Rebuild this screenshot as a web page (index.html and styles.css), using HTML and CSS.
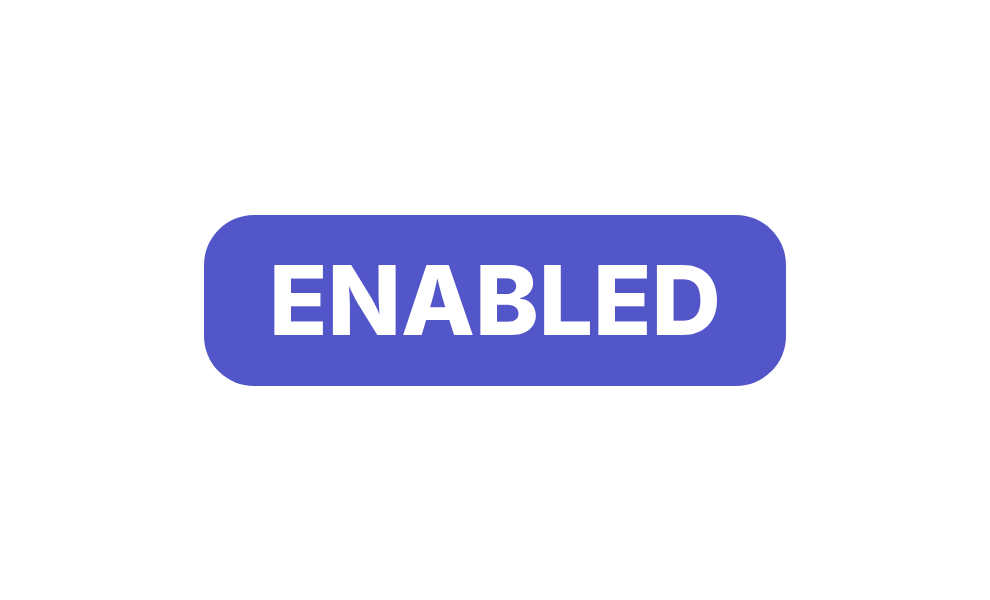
FILE: index.html
```html
<!DOCTYPE html>
<html>
<head>
<meta charset="utf-8">
<link rel="stylesheet" href="styles.css">
</head>
<body>
<div class="stage">
  <div class="badge">ENABLED</div>
</div>
</body>
</html>
```
FILE: styles.css
```css
html, body {
  margin: 0;
  padding: 0;
  background: #ffffff;
}
.stage {
  width: 990px;
  height: 600px;
  display: flex;
  align-items: center;
  justify-content: center;
}
.badge {
  box-sizing: border-box;
  width: 582px;
  height: 171px;
  border-radius: 50px;
  background: #5356c8;
  color: #ffffff;
  font-family: Inter, "Liberation Sans", sans-serif;
  font-weight: 800;
  font-size: 96px;
  line-height: 1;
  display: flex;
  align-items: center;
  justify-content: center;
}
```
